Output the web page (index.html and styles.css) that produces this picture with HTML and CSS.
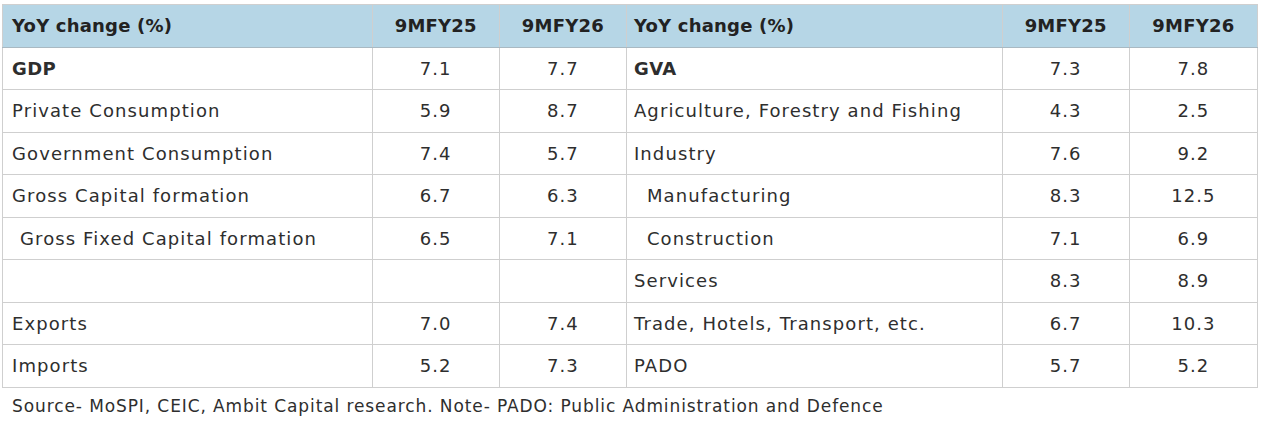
FILE: index.html
```html
<!DOCTYPE html>
<html lang="en">
<head>
<meta charset="utf-8">
<title>YoY change</title>
<link rel="stylesheet" href="styles.css">
</head>
<body>
<table class="grid">
  <colgroup>
    <col class="c-label-l"><col class="c-num"><col class="c-num">
    <col class="c-label-r"><col class="c-num"><col class="c-num-last">
  </colgroup>
  <thead>
    <tr class="head">
      <th class="lbl">YoY change (%)</th><th>9MFY25</th><th>9MFY26</th>
      <th class="lbl rl">YoY change (%)</th><th>9MFY25</th><th>9MFY26</th>
    </tr>
  </thead>
  <tbody>
    <tr>
      <td class="lbl strong">GDP</td><td>7.1</td><td>7.7</td>
      <td class="lbl rl strong">GVA</td><td>7.3</td><td>7.8</td>
    </tr>
    <tr>
      <td class="lbl">Private Consumption</td><td>5.9</td><td>8.7</td>
      <td class="lbl rl">Agriculture, Forestry and Fishing</td><td>4.3</td><td>2.5</td>
    </tr>
    <tr>
      <td class="lbl">Government Consumption</td><td>7.4</td><td>5.7</td>
      <td class="lbl rl">Industry</td><td>7.6</td><td>9.2</td>
    </tr>
    <tr>
      <td class="lbl">Gross Capital formation</td><td>6.7</td><td>6.3</td>
      <td class="lbl rl sub-r">Manufacturing</td><td>8.3</td><td>12.5</td>
    </tr>
    <tr>
      <td class="lbl sub-l">Gross Fixed Capital formation</td><td>6.5</td><td>7.1</td>
      <td class="lbl rl sub-r">Construction</td><td>7.1</td><td>6.9</td>
    </tr>
    <tr>
      <td class="lbl"></td><td></td><td></td>
      <td class="lbl rl">Services</td><td>8.3</td><td>8.9</td>
    </tr>
    <tr>
      <td class="lbl">Exports</td><td>7.0</td><td>7.4</td>
      <td class="lbl rl">Trade, Hotels, Transport, etc.</td><td>6.7</td><td>10.3</td>
    </tr>
    <tr>
      <td class="lbl">Imports</td><td>5.2</td><td>7.3</td>
      <td class="lbl rl">PADO</td><td>5.7</td><td>5.2</td>
    </tr>
  </tbody>
</table>
<p class="note">Source- MoSPI, CEIC, Ambit Capital research. Note- PADO: Public Administration and Defence</p>
</body>
</html>
```

FILE: styles.css
```css
html, body {
  margin: 0;
  padding: 0;
  background: #ffffff;
}

body {
  font-family: "DejaVu Sans", "Open Sans", sans-serif;
  color: #2e2e2e;
}

.grid {
  margin: 4px 0 0 2px;
  width: 1256px;
  table-layout: fixed;
  border-collapse: collapse;
  border: 1px solid #9a9a9a;
  font-size: 18px;
  letter-spacing: 1.1px;
}

.c-label-l { width: 369px; }
.c-num { width: 127px; }
.c-label-r { width: 375px; }
.c-num-last { width: 128px; }

.grid th,
.grid td {
  height: 41.5px;
  padding: 0;
  border: 1px solid #cfcfcf;
  text-align: center;
  vertical-align: middle;
  white-space: nowrap;
}

.grid .lbl {
  text-align: left;
  padding-left: 9px;
}

.grid .rl { padding-left: 7px; }
.grid .sub-l { padding-left: 17px; }
.grid .sub-r { padding-left: 20px; }

.head th {
  background: #b6d6e6;
  font-weight: 700;
  color: #222;
  letter-spacing: 0.2px;
  border-bottom-color: #a9b9c2;
}

.strong { font-weight: 700; letter-spacing: 0.4px; }

.note {
  margin: 8px 0 0 12px;
  font-size: 17px;
  letter-spacing: 0.9px;
  color: #2e2e2e;
}
```
